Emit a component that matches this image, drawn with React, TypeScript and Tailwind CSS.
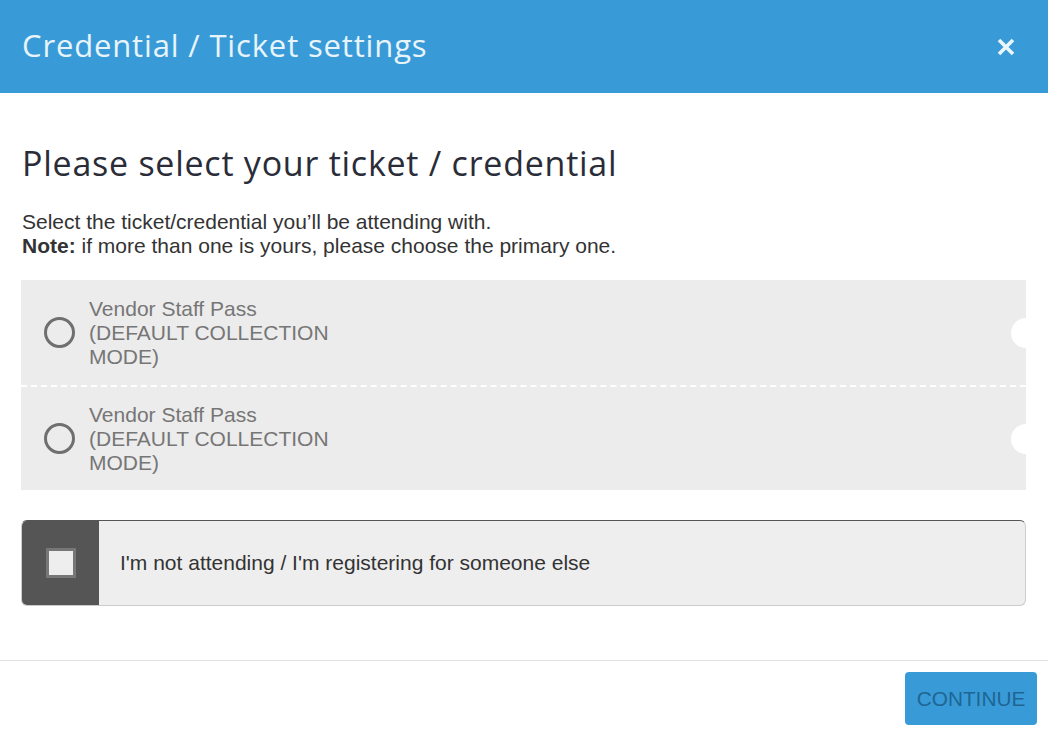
import React from "react";

function Ticket({ top }: { top?: boolean }) {
  return (
    <div
      className={
        "relative flex h-[105px] items-center bg-[#ececec] " +
        (top ? "" : "border-t-2 border-dashed border-white")
      }
    >
      <div className="ml-[23px] h-[31px] w-[31px] shrink-0 rounded-full border-[3px] border-[#6f6f6f]" />
      <div className="ml-[14px] w-[250px] text-[21px] leading-[24px] text-[#767676]">
        Vendor Staff Pass
        <br />
        (DEFAULT COLLECTION
        <br />
        MODE)
      </div>
      <div className="absolute right-[-15px] top-1/2 h-[30px] w-[30px] -translate-y-1/2 rounded-full bg-white" />
    </div>
  );
}

export default function App() {
  return (
    <div className="flex h-[735px] w-[1048px] flex-col overflow-hidden bg-white font-['Liberation_Sans',Arial,sans-serif]">
      <header className="flex h-[93px] shrink-0 items-center justify-between bg-[#389bd8] pl-[22px] pr-[32px]">
        <h1 className="mb-[3px] font-['Open_Sans',sans-serif] text-[31px] font-normal tracking-[0.85px] text-[#e8f4fb]">
          Credential / Ticket settings
        </h1>
        <svg width="20" height="20" viewBox="0 0 20 20" aria-label="close">
          <path d="M3 3 L17 17 M17 3 L3 17" stroke="#eaf5fc" strokeWidth="3.6" strokeLinecap="butt" />
        </svg>
      </header>

      <main className="flex-1 overflow-hidden pl-[21px] pr-[22px]">
        <h2 className="mt-[50px] pl-px font-['Open_Sans',sans-serif] text-[34px] font-normal leading-[40px] tracking-[0.75px] text-[#2a2c38]">
          Please select your ticket / credential
        </h2>
        <p className="mt-[27px] pl-px text-[21px] leading-[24px] text-[#333333]">
          Select the ticket/credential you’ll be attending with.
          <br />
          <b className="font-bold">Note:</b> if more than one is yours, please choose the primary one.
        </p>

        <div className="mt-[22px] overflow-hidden">
          <Ticket top />
          <Ticket />
        </div>

        <div className="mt-[30px] flex h-[86px] overflow-hidden rounded-[6px] border border-[#cccccc] border-t-[#555555] bg-[#eeeeee]">
          <div className="flex w-[77px] shrink-0 items-center justify-center bg-[#555555]">
            <div className="h-[30px] w-[30px] border-[3px] border-[#777777] bg-[#eeeeee]" />
          </div>
          <div className="flex items-center pl-[21px] text-[21px] text-[#333333]">
            I'm not attending / I'm registering for someone else
          </div>
        </div>
      </main>

      <footer className="flex h-[75px] shrink-0 items-start justify-end border-t border-[#e2e2e2] pr-[11px] pt-[11px]">
        <button className="flex h-[53px] w-[132px] items-center justify-center rounded-[4px] bg-[#389bd8] text-[20.8px] text-[#1f6593]">
          CONTINUE
        </button>
      </footer>
    </div>
  );
}
